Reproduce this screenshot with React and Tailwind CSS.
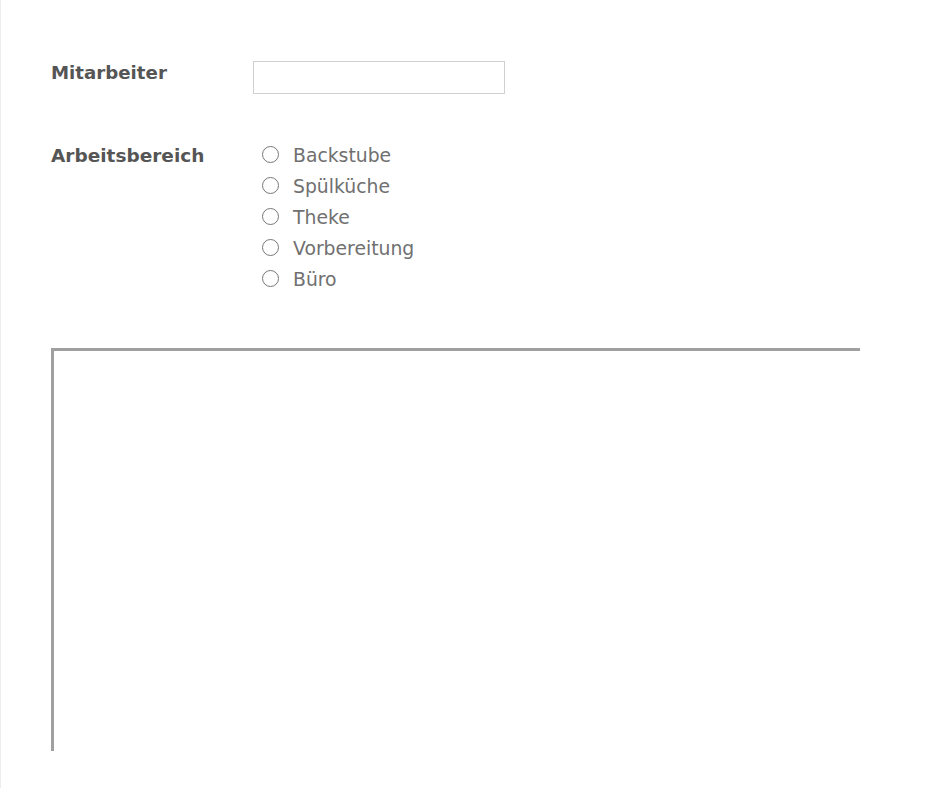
export default function App() {
  const areas = ["Backstube", "Spülküche", "Theke", "Vorbereitung", "Büro"];

  return (
    <div
      className="min-h-[788px] w-[930px] border-l border-[#ededed] bg-white"
      style={{ fontFamily: '"DejaVu Sans", Verdana, sans-serif' }}
    >
      <div className="pl-[50px] pt-[61px]">
        <div className="flex items-start">
          <label className="w-[202px] pt-[1px] text-[18.2px] font-bold leading-[22px] text-[#555]">
            Mitarbeiter
          </label>
          <input
            type="text"
            className="h-[33px] w-[252px] border border-[#d0d0d0] bg-white outline-none"
          />
        </div>

        <div className="mt-[51px] flex items-start">
          <label className="w-[211px] text-[18.5px] font-bold leading-[22px] text-[#555]">
            Arbeitsbereich
          </label>
          <div className="flex flex-col">
            {areas.map((area) => (
              <label key={area} className="flex h-[31px] items-start gap-[14px]">
                <span className="mt-[1px] h-[17px] w-[17px] rounded-full border border-[#777] bg-white" />
                <span className="text-[18.8px] leading-[22px] text-[#707070]">{area}</span>
              </label>
            ))}
          </div>
        </div>

        <div className="mt-[48px] h-[403px] w-[809px] border-l-[3px] border-t-[3px] border-[#a0a0a0]" />
      </div>
    </div>
  );
}
